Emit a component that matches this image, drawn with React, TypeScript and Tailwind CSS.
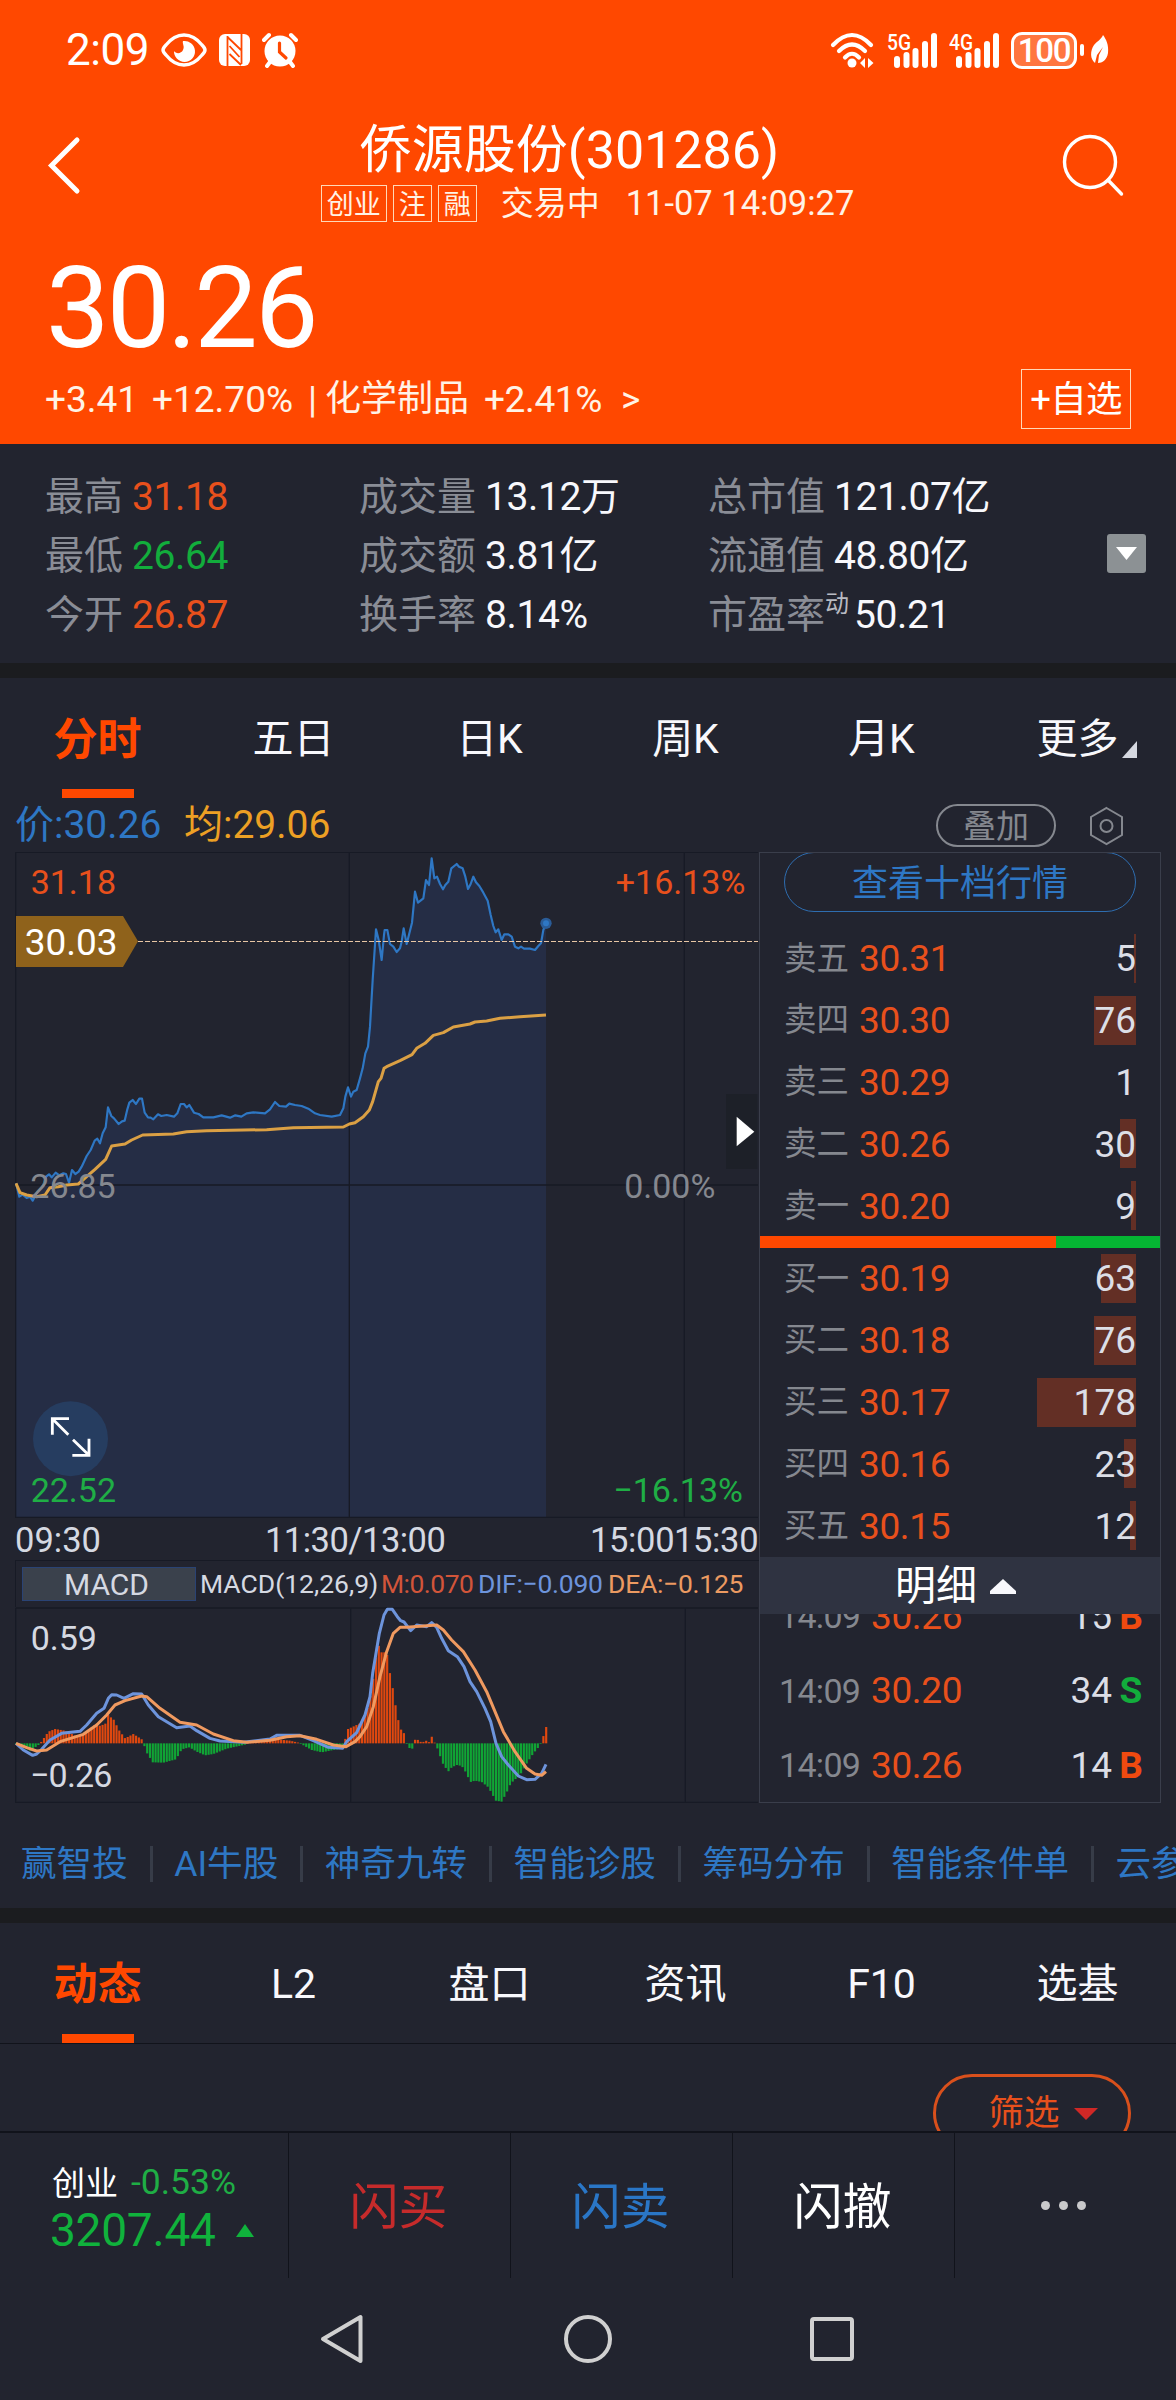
import { clsx } from 'clsx';

const HIST_ENVELOPE: [number, number][] = [
  [48, -2], [70, -12], [90, -22], [115, -5], [124, 5], [145, 35], [165, 43], [195, 38], [235, 18], [250, 28],
  [290, 60], [300, 52], [318, 60], [324, 85], [342, 70], [355, 42], [375, 15], [400, 28], [425, 12], [430, 0],
  [440, -28], [458, -57], [490, -58], [528, -48], [545, -18], [568, -12], [590, -25], [615, -36], [640, -32],
  [680, -16], [735, -4], [740, 1], [830, 12], [870, 8], [895, 2], [905, -3], [935, -20], [965, -27], [1000, -20],
  [1030, -15], [1036, 15], [1042, 42], [1080, 60], [1100, 95], [1115, 160], [1128, 260], [1138, 300], [1143, 273],
  [1160, 273], [1170, 208], [1179, 160], [1187, 110], [1195, 68], [1204, 38], [1212, 30], [1219, 0], [1228, -14],
  [1237, -16], [1240, 0], [1246, 13], [1254, 10], [1265, 2], [1278, 8], [1286, 2], [1295, 20], [1303, 3],
  [1310, -10], [1320, -38], [1330, -65], [1345, -84], [1355, -72], [1370, -65], [1385, -68], [1396, -85],
  [1411, -116], [1425, -112], [1445, -116], [1465, -132], [1475, -150], [1487, -172], [1505, -175], [1520, -147],
  [1532, -120], [1560, -95], [1580, -60], [1600, -30], [1615, -12], [1622, 0], [1630, 22], [1638, 48]
];

const PRICE_LINE =
  '48,1090 58,1130 68,1124 80,1134 90,1130 98,1142 112,1115 122,1105 130,1095 138,1070 147,1063 155,1072 167,1058 178,1066 190,1060 198,1062 207,1088 216,1050 226,1062 236,1055 245,1040 260,1008 272,990 284,962 292,956 300,970 308,940 317,922 324,862 334,888 342,895 356,912 366,904 374,902 382,868 388,848 398,840 408,852 418,836 426,836 434,878 444,892 452,893 460,898 474,883 484,888 500,885 522,890 532,880 542,852 552,852 560,862 568,855 582,878 596,882 610,892 640,892 665,886 690,893 706,886 724,890 740,880 760,877 795,880 810,868 825,846 838,858 858,860 868,851 885,855 905,858 925,866 945,880 960,885 995,890 1020,885 1030,865 1036,830 1044,802 1053,830 1060,815 1070,810 1080,775 1088,745 1096,700 1104,680 1110,620 1118,480 1128,328 1136,360 1145,420 1152,345 1154,330 1162,330 1170,372 1180,380 1190,396 1200,385 1205,365 1211,325 1220,372 1236,308 1245,215 1254,248 1270,235 1278,180 1287,195 1295,115 1303,175 1311,170 1320,192 1329,208 1336,195 1345,185 1354,145 1370,132 1377,140 1388,145 1396,170 1404,207 1412,192 1420,170 1428,187 1438,198 1450,218 1463,242 1472,285 1480,318 1487,337 1495,328 1505,360 1513,343 1525,343 1535,350 1545,380 1555,385 1563,380 1572,386 1590,386 1605,390 1615,378 1623,370 1630,330 1638,310';

const AVG_LINE =
  '48,1090 60,1118 80,1125 110,1130 135,1125 150,1103 175,1100 200,1095 235,1092 260,1070 285,1048 317,1018 335,978 375,972 395,960 428,945 520,942 560,935 620,932 800,929 880,923 1030,921 1048,912 1065,908 1090,890 1108,870 1118,845 1135,785 1143,775 1152,745 1160,740 1200,722 1236,704 1250,685 1275,670 1300,646 1330,638 1360,621 1410,612 1425,606 1460,603 1500,595 1560,590 1638,585';

const DIF_LINE =
  '48,1090 70,1110 98,1126 110,1122 125,1108 150,1080 185,1060 240,1054 260,1035 290,1000 312,985 325,955 335,944 350,945 372,955 400,941 425,942 445,975 475,1010 500,1025 530,1043 570,1038 590,1052 630,1075 660,1083 730,1087 810,1077 830,1066 900,1066 940,1082 985,1102 1028,1105 1040,1085 1070,1058 1095,1005 1110,950 1118,880 1138,760 1152,705 1162,688 1177,688 1192,710 1202,722 1212,726 1232,752 1250,735 1280,740 1295,728 1310,742 1325,775 1345,812 1372,830 1392,860 1410,905 1430,935 1455,985 1472,1025 1488,1090 1505,1130 1525,1155 1555,1188 1580,1199 1605,1198 1625,1180 1638,1153';

const DEA_LINE =
  '48,1090 80,1103 110,1113 140,1110 180,1085 250,1063 290,1035 320,1005 345,975 375,962 425,948 440,950 480,985 540,1027 590,1035 640,1062 700,1082 740,1087 810,1081 860,1070 900,1067 950,1078 1000,1095 1038,1100 1065,1085 1080,1070 1100,1040 1120,980 1140,890 1160,815 1180,760 1200,742 1220,742 1240,740 1310,735 1330,750 1355,780 1390,815 1425,870 1460,935 1485,995 1510,1055 1545,1115 1580,1165 1605,1182 1625,1186 1638,1175';

function histogramBars() {
  const bars: { x: number; h: number }[] = [];
  let seg = 0;
  for (let i = 0; i < 191; i++) {
    const x = 48 + i * 8.37;
    while (seg < HIST_ENVELOPE.length - 2 && HIST_ENVELOPE[seg + 1][0] < x) seg++;
    const [x0, h0] = HIST_ENVELOPE[seg];
    const [x1, h1] = HIST_ENVELOPE[seg + 1];
    bars.push({ x, h: h0 + ((h1 - h0) * (x - x0)) / (x1 - x0) });
  }
  return bars;
}

function SignalBars({ label }: { label: string }) {
  return (
    <svg width="52" height="38" viewBox="0 0 52 38" fill="white">
      <text x="0" y="19" fontSize="22" fontWeight="500" textLength="24" lengthAdjust="spacingAndGlyphs">{label}</text>
      <rect x="7" y="25" width="6" height="12" rx="3" />
      <rect x="16.5" y="21" width="6" height="16" rx="3" />
      <rect x="25.5" y="17" width="6" height="20" rx="3" />
      <rect x="35" y="10" width="6" height="27" rx="3" />
      <rect x="44" y="2" width="6" height="35" rx="3" />
    </svg>
  );
}

function StatusBar() {
  return (
    <div className="flex h-[100px] items-center justify-between pl-[66px] pr-[66px] text-white">
      <div className="flex items-center">
        <span className="w-[95px] text-[44px] leading-none tracking-[-0.01em]">2:09</span>
        <svg width="46" height="34" viewBox="0 0 46 34" fill="none" stroke="white">
          <path d="M2 17 Q2 15 5 12 Q13 2 23 2 Q33 2 41 12 Q44 15 44 17 Q44 19 41 22 Q33 32 23 32 Q13 32 5 22 Q2 19 2 17Z" strokeWidth="3.4" />
          <path d="M22 8 A10.5 10.5 0 1 1 13 18 C15 21 20 21 22 17 C24 13 21 11 22 8Z" fill="white" stroke="none" />
        </svg>
        <svg className="ml-3" width="31" height="34" viewBox="0 0 31 34">
          <rect x="0" y="1" width="31" height="32" rx="6" fill="white" />
          <path d="M8.500 33 V3 M22.500 31 V1 M8.500 4 L22 17 M10.500 13 L20.500 24 M10.500 21 L22 32" fill="none" stroke="#ff4800" strokeWidth="1.8" />
        </svg>
        <svg className="ml-3" width="36" height="36" viewBox="0 0 36 36" fill="none" stroke="white" strokeLinecap="round">
          <circle cx="18" cy="19" r="15.500" fill="white" stroke="none" />
          <path d="M2 8 L7 3 M34 8 L29 3 M8 30 L5 34 M28 30 L31 34" strokeWidth="4" />
          <path d="M17.500 11 V20 L24 26" stroke="#ff4800" strokeWidth="3.2" />
        </svg>
      </div>
      <div className="flex items-center">
        <svg width="46" height="38" viewBox="0 0 46 38" fill="none" stroke="white" strokeWidth="4.2" strokeLinecap="round">
          <path d="M3 14 Q22 -6 41 14" />
          <path d="M9 20 Q22 7 35 20" />
          <path d="M15 26.500 Q22 19 29 26.500" />
          <circle cx="22" cy="32" r="4.500" fill="white" stroke="none" />
          <path d="M35 27 V37 L30 32Z M38 27 V37 L43.500 32Z" fill="white" stroke="none" />
        </svg>
        <div className="ml-[11px] flex gap-[10px]">
          <SignalBars label="5G" />
          <SignalBars label="4G" />
        </div>
        <div className="ml-[10px] flex h-[37px] w-[66px] items-center justify-center rounded-[11px] border-3 border-white bg-white/25 text-[33px] font-medium leading-none tracking-[-0.04em]">100</div>
        <div className="ml-[3px] h-[12px] w-[4px] rounded-sm bg-white" />
        <svg className="ml-[6px]" width="20" height="32" viewBox="0 0 20 32">
          <path d="M13 1 C16 5 19 11 18 19 C17 26 12 29 8 29 L9 21 L13 13 L7 21 L5 29 C0 25 0 17 4 11 C7 7 11 6 13 1Z" fill="white" />
        </svg>
      </div>
    </div>
  );
}

function Header() {
  return (
    <header className="h-[444px] bg-[#ff4800] text-white">
      <StatusBar />
      <div className="flex h-[130px] justify-between pl-[45px] pr-[51px]">
        <svg className="mt-[36px]" width="40" height="60" viewBox="0 0 40 60" fill="none" stroke="white" strokeWidth="5" strokeLinecap="round">
          <path d="M32 4 L6.500 29.500 L32 55" />
        </svg>
        <div className="flex flex-col items-center pl-[29px] pt-[21px]">
          <h1 className="mr-[36px] h-[58px] text-[52px] leading-[60px]">侨源股份(301286)</h1>
          <div className="mt-[6px] flex h-[37px] items-center text-[34.5px] leading-none text-[#fff3e6]">
            <span className="flex h-[37px] w-[66px] items-center justify-center border border-[#ffd9b8] pt-[3px] text-[27px]">创业</span>
            <span className="ml-[6px] flex h-[37px] w-[39px] items-center justify-center border border-[#ffd9b8] pt-[3px] text-[27px]">注</span>
            <span className="ml-[6px] flex h-[37px] w-[39px] items-center justify-center border border-[#ffd9b8] pt-[3px] text-[27px]">融</span>
            <span className="ml-[24px] text-[33px]">交易中</span>
            <span className="ml-[26px]">11-07 14:09:27</span>
          </div>
        </div>
        <svg className="mt-[34px]" width="64" height="64" viewBox="0 0 64 64" fill="none" stroke="white" strokeWidth="3.400" strokeLinecap="round">
          <circle cx="29" cy="28" r="25.500" />
          <path d="M47 46 L60.500 60" />
        </svg>
      </div>
      <div className="mt-[19px] h-[117px] pl-[46px] text-[113px] leading-[119px] tracking-[-0.025em]">30.26</div>
      <div className="flex h-[64px] items-center justify-between pl-[45px] pr-[45px] pt-[2px]">
        <div className="flex items-center text-[37px] leading-none text-[#fff3e6]">
          <span className="w-[107px]">+3.41</span>
          <span className="w-[156px]">+12.70%</span>
          <span className="w-[17px]">|</span>
          <span className="w-[159px] text-[36px]">化学制品</span>
          <span className="w-[137px] tracking-[-0.01em]">+2.41%</span>
          <span>&gt;</span>
        </div>
        <button className="h-[60px] w-[110px] border border-[#ffd9b8] pt-[2px] text-[36.5px] leading-none tracking-[-0.02em]">+自选</button>
      </div>
    </header>
  );
}

const stats = [
  {
    width: 'w-[314px]',
    rows: [
      { label: '最高', value: '31.18', color: 'text-[#e8501c]' },
      { label: '最低', value: '26.64', color: 'text-[#12ad3c]' },
      { label: '今开', value: '26.87', color: 'text-[#e8501c]' }
    ]
  },
  {
    width: 'w-[349px]',
    rows: [
      { label: '成交量', value: '13.12万', color: 'text-[#f8f8fc]' },
      { label: '成交额', value: '3.81亿', color: 'text-[#f8f8fc]' },
      { label: '换手率', value: '8.14%', color: 'text-[#f8f8fc]' }
    ]
  },
  {
    width: 'w-[399px]',
    rows: [
      { label: '总市值', value: '121.07亿', color: 'text-[#f8f8fc]' },
      { label: '流通值', value: '48.80亿', color: 'text-[#f8f8fc]' },
      { label: '市盈率', sup: '动', value: '50.21', color: 'text-[#f8f8fc]' }
    ]
  }
];

function Stats() {
  return (
    <section className="flex h-[219px] pl-[45px] pt-[24px]">
      {stats.map((col, i) => (
        <div key={i} className={col.width}>
          {col.rows.map((row) => (
            <div key={row.label} className="flex h-[59px] items-center text-[39px] leading-none">
              <span className="text-[#8a8d96]">{row.label}</span>
              {'sup' in row && <span className="-mr-[4px] -mt-6 text-[24px] text-[#b8bac2]">{row.sup}</span>}
              <span className={clsx('ml-[9px] tracking-[-0.01em]', row.color)}>{row.value}</span>
            </div>
          ))}
        </div>
      ))}
      <div className="mt-[66px] flex h-[39px] w-[39px] items-center justify-center rounded-[3px] bg-[#8c9194]">
        <svg width="21" height="13" viewBox="0 0 21 13" fill="white"><path d="M0 0 H21 L10.500 13Z" /></svg>
      </div>
    </section>
  );
}

function TabRow({ tabs, more }: { tabs: string[]; more?: boolean }) {
  return (
    <nav className="grid h-[120px] grid-cols-6 text-[41px] leading-none text-[#f8f8fc]">
      {tabs.map((tab, i) => (
        <div key={tab} className="flex flex-col items-center">
          <div className={clsx('flex h-[111px] items-center pr-[1px] pt-[12px]', i === 0 && 'text-[44px] font-bold text-[#ff4800]')}>
            {tab}
            {more && i === 5 && (
              <svg className="-mr-[18px] ml-[3px] mt-[20px]" width="15" height="17" viewBox="0 0 15 17"><path d="M15 0 V17 H0Z" fill="#d5d8e0" /></svg>
            )}
          </div>
          {i === 0 && <div className="h-[9px] w-[72px] bg-[#ff4800]" />}
        </div>
      ))}
    </nav>
  );
}

function ChartLegend() {
  return (
    <div className="flex h-[54px] items-center pl-[15px] pt-px text-[39px] leading-none">
      <span className="w-[169px] text-[#2e77c4]">价:30.26</span>
      <span className="text-[#eda024]">均:29.06</span>
      <span className="ml-auto flex h-[43px] w-[120px] items-center justify-center rounded-full border-2 border-[#85888f] pt-[2px] text-[33px] text-[#85888f]">叠加</span>
      <svg className="ml-[33px] mr-[52px]" width="35" height="40" viewBox="0 0 35 40" fill="none" stroke="#85888f" strokeWidth="2">
        <path d="M17.500 2 L33 11 V29 L17.500 38 L2 29 V11Z" />
        <circle cx="17.500" cy="20" r="6" />
      </svg>
    </div>
  );
}

function PriceChart() {
  return (
    <svg className="block" width="744" height="666" viewBox="45 96 2232 1998" fontSize="102">
      <polygon points={`48,2091 ${PRICE_LINE} 1638,2091`} fill="#252d45" />
      <g stroke="#171a25" strokeWidth="4" fill="none">
        <path d="M47 97 H2274 M47 97 V2092 H2274 M1048 97 V2092 M2053 97 V2092 M47 1095 H2274" />
      </g>
      <polyline points={PRICE_LINE} fill="none" stroke="#2e77c4" strokeWidth="6.500" strokeLinejoin="round" />
      <polyline points={AVG_LINE} fill="none" stroke="#dba044" strokeWidth="9" strokeLinejoin="round" />
      <path d="M414 364.500 H2274" stroke="#e8c6a4" strokeWidth="3" strokeDasharray="15 6" />
      <circle cx="1638" cy="310" r="17" fill="#2a5c98" />
      <circle cx="1638" cy="310" r="9" fill="#2e77c4" />
      <path d="M48 288 H369 L414 364 L369 441 H48Z" fill="#8f621b" />
      <text x="74" y="405" fontSize="111" fill="white">30.03</text>
      <text x="92" y="222" fill="#e8501c">31.18</text>
      <text x="2236" y="222" textAnchor="end" fill="#e8501c">+16.13%</text>
      <text x="91" y="1134" fill="#85888f">26.85</text>
      <text x="2146" y="1134" textAnchor="end" fill="#85888f">0.00%</text>
      <rect x="2178" y="822" width="94" height="225" fill="#1d2028" />
      <path d="M2210 890 L2263 935 L2210 979Z" fill="white" />
      <circle cx="211.500" cy="1856" r="112.500" fill="#263d60" />
      <path d="M207 1796 H157 V1844 M157 1796 L205 1844 M217 1906 H267 V1856 M267 1906 L219 1859" fill="none" stroke="white" strokeWidth="8.500" />
      <text x="92" y="2046" fill="#1fae45">22.52</text>
      <text x="2229" y="2046" textAnchor="end" fill="#1fae45">−16.13%</text>
    </svg>
  );
}

function MacdChart() {
  return (
    <svg className="block" width="744" height="196" viewBox="45 681 2232 588" fontSize="102">
      <path d="M47 684 H2274 M47 684 V1267 H2274 M1052 684 V1267 M2056 684 V1267" stroke="#171a25" strokeWidth="4" fill="none" />
      {histogramBars().map((bar, i) => (
        <rect
          key={i}
          x={bar.x - 3}
          y={bar.h > 0 ? 1090 - bar.h : 1090}
          width="6.500"
          height={Math.max(Math.abs(bar.h), 2)}
          fill={bar.h > 0 ? '#e0480f' : '#10a535'}
        />
      ))}
      <polyline points={DIF_LINE} fill="none" stroke="#6d94dc" strokeWidth="9" strokeLinejoin="round" />
      <polyline points={DEA_LINE} fill="none" stroke="#f09a60" strokeWidth="9" strokeLinejoin="round" />
      <text x="92" y="810" fill="#d5d9e2">0.59</text>
      <text x="90" y="1220" fill="#d5d9e2" letterSpacing="-2.500">−0.26</text>
    </svg>
  );
}

const asks = [
  { label: '卖五', price: '30.31', qty: 5, bar: 2 },
  { label: '卖四', price: '30.30', qty: 76, bar: 42 },
  { label: '卖三', price: '30.29', qty: 1, bar: 0 },
  { label: '卖二', price: '30.26', qty: 30, bar: 16 },
  { label: '卖一', price: '30.20', qty: 9, bar: 5 }
];

const bids = [
  { label: '买一', price: '30.19', qty: 63, bar: 35 },
  { label: '买二', price: '30.18', qty: 76, bar: 42 },
  { label: '买三', price: '30.17', qty: 178, bar: 99 },
  { label: '买四', price: '30.16', qty: 23, bar: 12 },
  { label: '买五', price: '30.15', qty: 12, bar: 6 }
];

const ticks = [
  { time: '14:09', price: '30.26', qty: 15, side: 'B' },
  { time: '14:09', price: '30.20', qty: 34, side: 'S' },
  { time: '14:09', price: '30.26', qty: 14, side: 'B' }
];

function QuoteRow({ row }: { row: (typeof asks)[number] }) {
  return (
    <div className="relative flex h-[61.8px] items-center pl-[24px] pr-[24px] leading-none">
      <div className="absolute right-[24px] top-[6px] h-[49px] bg-[#632f25]" style={{ width: row.bar }} />
      <span className="w-[75px] text-[32.5px] text-[#85888f]">{row.label}</span>
      <span className="text-[37px] tracking-[-0.01em] text-[#e8501c]">{row.price}</span>
      <span className="relative ml-auto text-[37px] text-[#dcdee6]">{row.qty}</span>
    </div>
  );
}

function OrderBook() {
  return (
    <aside className="flex h-[951px] w-[402px] flex-col overflow-hidden border border-[#3a3e4b]">
      <button className="mx-6 -mt-px h-[60px] shrink-0 rounded-full border border-[#2e6db0] pt-[3px] text-[36px] leading-none text-[#2e77c4]">查看十档行情</button>
      <div className="mt-[16px]">
        {asks.map((row) => <QuoteRow key={row.label} row={row} />)}
      </div>
      <div className="-mt-px flex h-[12px] shrink-0">
        <div className="w-[296px] bg-[#ff4800]" />
        <div className="flex-1 bg-[#05b533]" />
      </div>
      <div>
        {bids.map((row) => <QuoteRow key={row.label} row={row} />)}
      </div>
      <div className="z-10 flex h-[57px] shrink-0 items-center bg-[#2f3341] pl-[135px] pt-[2px] text-[41px] leading-none text-white">
        明细
        <svg className="ml-[13px]" width="26" height="15" viewBox="0 0 26 15"><path d="M13 0 L26 12 V15 H0 V12Z" fill="#f8f8fc" /></svg>
      </div>
      <div className="-mt-[35px]">
        {ticks.map((tick, i) => (
          <div key={i} className="flex h-[74.5px] items-center pl-[19px] pr-[17px] text-[37px] leading-none">
            <span className="w-[92px] text-[34px] tracking-[-0.02em] text-[#85888f]">{tick.time}</span>
            <span className="tracking-[-0.01em] text-[#e8501c]">{tick.price}</span>
            <span className="ml-auto text-[37px] text-[#dcdee6]">{tick.qty}</span>
            <span className={clsx('ml-[7px] w-[24px] text-center font-bold', tick.side === 'B' ? 'text-[#f04a10]' : 'text-[#12ad3c]')}>{tick.side}</span>
          </div>
        ))}
      </div>
    </aside>
  );
}

function ChartArea() {
  return (
    <section className="flex pl-[15px]">
      <div className="w-[744px]">
        <PriceChart />
        <div className="flex h-[42px] items-center pt-[2px] text-[34.5px] leading-none text-[#d5d9e2]">
          <span className="w-[250px]">09:30</span>
          <span className="w-[325px] tracking-[-0.015em]">11:30/13:00</span>
          <span className="w-[84px] tracking-[-0.01em]">15:00</span>
          <span className="tracking-[-0.01em]">15:30</span>
        </div>
        <div className="flex h-[47px] items-center border-l border-t border-[#171a25] pl-[6px] text-[26.5px] leading-none">
          <span className="flex h-[34px] w-[174px] items-center justify-center border border-[#2a4374] bg-[#3a414c] pr-[5px] pt-[2px] text-[30px] text-[#d5d9e2]">MACD</span>
          <span className="ml-[4px] w-[181px] whitespace-nowrap pt-px text-[#d5d9e2]">MACD(12,26,9)</span>
          <span className="w-[97px] pt-px tracking-[-0.02em] text-[#d2553a]">M:0.070</span>
          <span className="w-[130px] pt-px tracking-[-0.01em] text-[#6d94dc]">DIF:−0.090</span>
          <span className="pt-px tracking-[-0.01em] text-[#eb9a61]">DEA:−0.125</span>
        </div>
        <MacdChart />
      </div>
      <OrderBook />
    </section>
  );
}

const links = ['赢智投', 'AI牛股', '神奇九转', '智能诊股', '筹码分布', '智能条件单', '云参数'];

function QuickLinks() {
  return (
    <div className="flex h-[105px] items-center overflow-hidden whitespace-nowrap pl-[21px] pt-[16px] text-[35.6px] leading-none text-[#2e77c4]">
      {links.map((link, i) => (
        <div key={link} className="flex shrink-0 items-center">
          {i > 0 && <div className="ml-[22px] mr-[21.5px] h-[36px] w-[3px] bg-[#373c48]" />}
          <span className="pt-[3px]">{link}</span>
        </div>
      ))}
    </div>
  );
}

function BottomBar() {
  return (
    <div className="flex h-[147px] border-t-2 border-[#11131b] text-[49px] leading-none">
      <div className="flex w-[288px] flex-col pl-[50px] pt-[30px]">
        <div className="flex h-[40px] items-center">
          <span className="pl-[2px] text-[33px] text-white">创业</span>
          <span className="ml-[13px] text-[35.5px] text-[#1fae45]">-0.53%</span>
        </div>
        <div className="mt-[2px] flex h-[50px] items-center text-[46px] tracking-[-0.005em] text-[#10b23c]">
          3207.44
          <svg className="ml-[20px]" width="18" height="13" viewBox="0 0 18 13"><path d="M9 0 L18 13 H0Z" fill="#10b23c" /></svg>
        </div>
      </div>
      <button className="w-[222px] border-l border-[#11131b] pr-[2px] pt-[4px] text-[#c62b2b]">闪买</button>
      <button className="w-[222px] border-l border-[#11131b] pr-[2px] pt-[4px] text-[#2a76c6]">闪卖</button>
      <button className="w-[222px] border-l border-[#11131b] pr-[2px] pt-[4px] text-white">闪撤</button>
      <div className="flex flex-1 items-center justify-center gap-[9px] border-l border-[#11131b] pr-[4px]">
        <i className="h-[9px] w-[9px] rounded-full bg-[#c9c9cb]" />
        <i className="h-[9px] w-[9px] rounded-full bg-[#c9c9cb]" />
        <i className="h-[9px] w-[9px] rounded-full bg-[#c9c9cb]" />
      </div>
    </div>
  );
}

function SystemNav() {
  return (
    <div className="flex h-[122px] items-center pl-[319px]">
      <svg width="46" height="50" viewBox="0 0 46 50" fill="none" stroke="#d0d0d0" strokeWidth="4" strokeLinejoin="round">
        <path d="M41.500 3 V47 L4 25Z" />
      </svg>
      <svg className="ml-[198px]" width="50" height="50" viewBox="0 0 50 50" fill="none" stroke="#d0d0d0" strokeWidth="4">
        <circle cx="25" cy="25" r="22" />
      </svg>
      <svg className="ml-[197px]" width="44" height="44" viewBox="0 0 44 44" fill="none" stroke="#d0d0d0" strokeWidth="4">
        <rect x="2" y="2" width="40" height="40" rx="2" />
      </svg>
    </div>
  );
}

export default function App() {
  return (
    <div className="h-[2400px] w-[1176px] overflow-hidden bg-[#22242f] font-['Roboto','Noto_Sans_CJK_SC',sans-serif]">
      <Header />
      <Stats />
      <div className="h-[15px] bg-[#1b1c1f]" />
      <TabRow tabs={['分时', '五日', '日K', '周K', '月K', '更多']} more />
      <ChartLegend />
      <ChartArea />
      <QuickLinks />
      <div className="h-[15px] bg-[#1b1c1f]" />
      <TabRow tabs={['动态', 'L2', '盘口', '资讯', 'F10', '选基']} />
      <div className="flex h-[88px] justify-end overflow-hidden border-t border-[#11131b] pr-[45px] pt-[30px]">
        <div className="flex h-[78px] w-[198px] shrink-0 items-center justify-center gap-[14px] rounded-full border-3 border-[#d9501c] pl-[22px] pt-[2px] text-[35.5px] leading-none text-[#e8501c]">
          筛选
          <svg width="24" height="12" viewBox="0 0 24 12"><path d="M0 0 H24 L12 12Z" fill="#d02826" /></svg>
        </div>
      </div>
      <BottomBar />
      <SystemNav />
    </div>
  );
}
